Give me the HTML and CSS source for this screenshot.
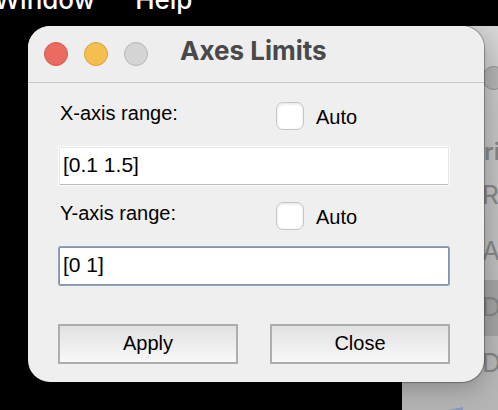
FILE: index.html
```html
<!DOCTYPE html>
<html lang="en">
<head>
<meta charset="utf-8">
<title>Axes Limits</title>
<link rel="stylesheet" href="styles.css">
</head>
<body>
<nav class="menubar">
  <a href="#window">Window</a>
  <a href="#help">Help</a>
</nav>
<aside class="finder">
  <div class="finder-bar"><span class="light finder-light"></span></div>
  <h2 class="finder-heading">ri</h2>
  <ul class="finder-list">
    <li>R</li>
    <li>A</li>
    <li class="selected">D</li>
    <li>D</li>
    <li><svg class="folder" viewBox="0 0 30 30" aria-hidden="true"><path d="M0 3 15 0V30H0Z"/></svg></li>
  </ul>
</aside>
<main class="dialog">
  <header class="titlebar">
    <button class="light red" type="button" aria-label="Close window"></button>
    <button class="light yellow" type="button" aria-label="Minimize"></button>
    <button class="light gray" type="button" aria-label="Zoom" disabled></button>
    <h1>Axes Limits</h1>
  </header>
  <form class="form">
    <div class="row">
      <label class="name" for="x-range">X-axis range:</label>
      <label class="auto"><input type="checkbox"><span>Auto</span></label>
    </div>
    <input class="range" id="x-range" type="text" value="[0.1 1.5]">
    <div class="row">
      <label class="name" for="y-range">Y-axis range:</label>
      <label class="auto"><input type="checkbox"><span>Auto</span></label>
    </div>
    <input class="range active" id="y-range" type="text" value="[0 1]">
    <div class="actions">
      <button class="action" type="button">Apply</button>
      <button class="action" type="button">Close</button>
    </div>
  </form>
</main>
</body>
</html>
```
FILE: styles.css
```css
* {
  box-sizing: border-box;
}

body {
  margin: 0;
  min-height: 100vh;
  position: relative;
  overflow: hidden;
  background: #000;
  color: #000;
  font-family: "Liberation Sans", Arial, sans-serif;
  font-size: 20px;
}

.menubar {
  position: absolute;
  top: -16px;
  left: -6px;
  display: flex;
  gap: 40px;
  font-family: Inter, sans-serif;
  font-size: 26px;
  font-weight: 500;
  line-height: 32px;
}

.menubar a {
  color: #fff;
  text-decoration: none;
}

.finder {
  position: absolute;
  top: 26px;
  right: 0;
  bottom: 0;
  width: 96px;
  overflow: hidden;
  background: linear-gradient(#d6d6d6, #c2c2c2 80px, #b9b9b9 300px, #b4b4b4);
  color: #858585;
  font-family: Inter, sans-serif;
  font-size: 26px;
}

.finder-bar {
  display: flex;
  height: 106px;
  padding: 40px 0 0 80px;
}

.finder-heading {
  margin: 0;
  padding-left: 82px;
  font-size: 24px;
  font-weight: 600;
  line-height: 40px;
}

.finder-list {
  margin: -4px 0 0;
  padding: 0;
  list-style: none;
}

.finder-list li {
  height: 56px;
  padding-left: 80px;
  line-height: 54px;
}

.finder-list .selected {
  background: #a2a2a2;
}

.finder-list li:last-child {
  padding: 15px 0 0 46px;
}

.folder {
  display: block;
  width: 30px;
  height: 30px;
  fill: #7f9cc5;
}

.dialog {
  position: relative;
  margin: 26px 14px 28px 28px;
  overflow: hidden;
  border-radius: 22px;
  background: #efefef;
  box-shadow: 0 0 1px 1px rgba(0, 0, 0, 0.3), 0 6px 24px rgba(0, 0, 0, 0.25);
}

.titlebar {
  display: flex;
  align-items: center;
  gap: 16px;
  height: 57px;
  padding: 0 16px;
  border-bottom: 1px solid #c6c6c6;
  background: #eee;
}

.titlebar h1 {
  margin: 0 0 6px 16px;
  color: #494949;
  font-family: Inter, sans-serif;
  font-size: 26px;
  font-weight: 700;
  line-height: 32px;
}

.light {
  flex: none;
  width: 24px;
  height: 24px;
  padding: 0;
  border: 1px solid #b5b5b5;
  border-radius: 50%;
  background: #d4d4d4;
}

.light.red {
  border-color: #d65549;
  background: #ec6b60;
}

.light.yellow {
  border-color: #d8a03a;
  background: #f5bf4f;
}

.finder-light {
  border-color: #909090;
  background: #b0b0b0;
}

.form {
  padding: 15px 34px 18px 30px;
}

.row {
  display: grid;
  grid-template-columns: 218px 1fr;
  height: 48px;
}

.name {
  padding: 3px 2px;
  line-height: 24px;
}

.auto {
  display: flex;
  align-items: center;
  gap: 12px;
  height: 36px;
}

.auto span {
  padding-top: 2px;
}

.auto input {
  appearance: none;
  width: 28px;
  height: 28px;
  margin: 0;
  border: 1px solid #c6c6c6;
  border-radius: 7px;
  background: #fff;
  box-shadow: inset 0 1px 3px rgba(0, 0, 0, 0.12);
}

.range {
  display: block;
  width: 100%;
  height: 40px;
  margin-bottom: 12px;
  padding: 0 4px 2px;
  border: 1px solid #fbfbfb;
  border-radius: 0;
  outline: none;
  background: #fff;
  box-shadow: inset 0 1px #e6e6e6, inset 1px 0 #e6e6e6, inset -1px 0 #e6e6e6, inset 0 -1px #bdbdbd;
  color: #000;
  font: 21px "Liberation Sans", Arial, sans-serif;
}

.range.active {
  border-color: #93a3ba;
  border-radius: 2px;
  box-shadow: inset 0 0 0 1px #8294ae;
}

.actions {
  display: grid;
  grid-template-columns: 1fr 1fr;
  gap: 32px;
  margin-top: 38px;
}

.action {
  height: 40px;
  padding: 0 0 2px;
  border: 2px solid #adadad;
  border-radius: 0;
  background: linear-gradient(#e1e1e1, #f8f8f8);
  color: #000;
  font: 20px "Liberation Sans", Arial, sans-serif;
}
```
